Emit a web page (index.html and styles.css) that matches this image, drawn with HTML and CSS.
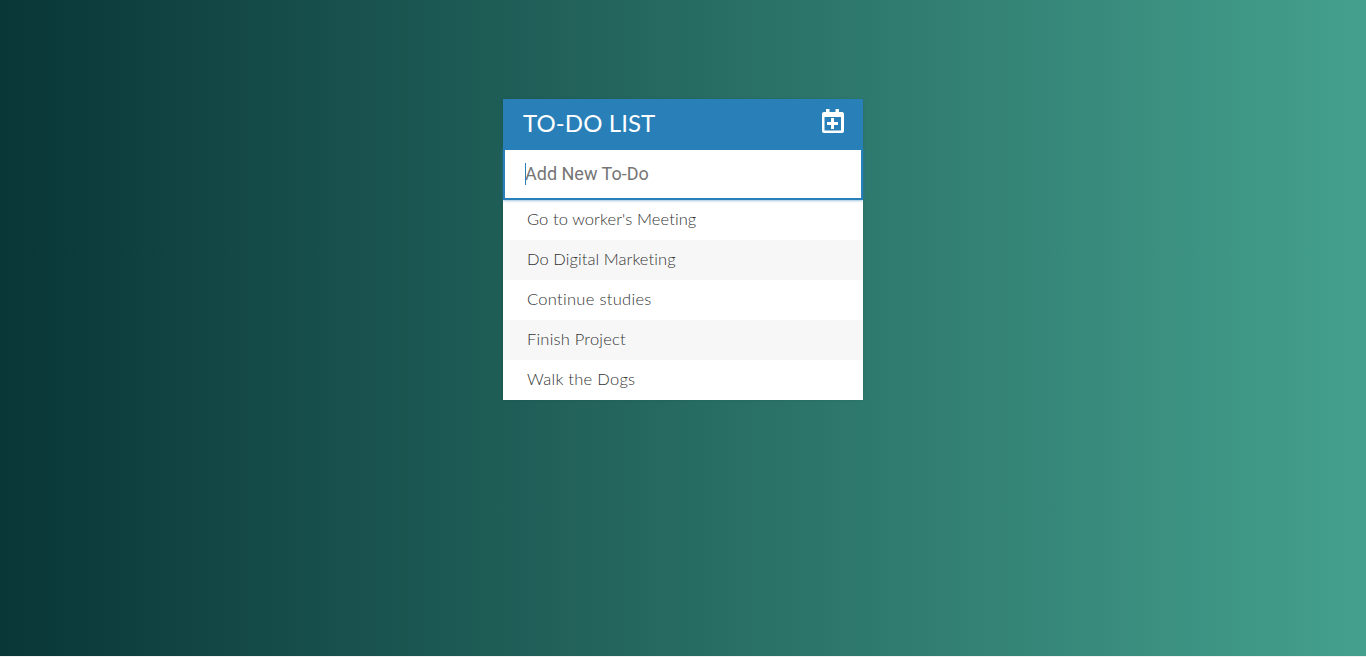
FILE: index.html
```html
<!DOCTYPE html>
<html lang="en">
<head>
<meta charset="utf-8">
<title>To-Do List</title>
<link rel="stylesheet" href="styles.css">
</head>
<body>
<main class="container">
  <header class="header">
    <h1 class="title">TO-DO LIST</h1>
    <svg class="toggle" viewBox="0 0 22 24" width="22" height="24" aria-hidden="true">
      <path fill="#fff" fill-rule="evenodd" d="M4 0h3.500v3H13.500V0H17v3h3a2 2 0 0 1 2 2v17a2 2 0 0 1-2 2H2a2 2 0 0 1-2-2V5a2 2 0 0 1 2-2h2zM2.500 8v13.500h16.500V8z"/>
      <path fill="#fff" d="M9 9h3v4h4v3h-4v4H9v-4H5v-3h4z"/>
    </svg>
  </header>
  <div class="field"><span class="caret"></span><span class="placeholder">Add New To-Do</span></div>
  <ul class="list">
    <li class="item meeting">Go to worker's Meeting</li>
    <li class="item marketing">Do Digital Marketing</li>
    <li class="item studies">Continue studies</li>
    <li class="item project">Finish Project</li>
    <li class="item dogs">Walk the Dogs</li>
  </ul>
</main>
</body>
</html>
```
FILE: styles.css
```css
* { box-sizing: border-box; }
html { background: #f1f1f1; overflow: hidden; }
body {
  margin: 0;
  height: 657px;
  overflow: hidden;
  padding-top: 99px;
  background: linear-gradient(to right, #093637, #44a08d);
  border-bottom: 1px solid #f1f1f1;
  font-family: Lato, sans-serif;
}
.container {
  width: 360px;
  margin: 0 auto;
  background: #fff;
  box-shadow: 0 0 3px rgba(0, 0, 0, .1);
}
.header {
  height: 49px;
  padding: 0 19px 0 20px;
  display: flex;
  justify-content: space-between;
  background: #2980b9;
}
.title {
  margin: 0;
  color: #fff;
  font-size: 24px;
  font-weight: 400;
  line-height: 48px;
  letter-spacing: .1px;
}
.toggle { margin-top: 10px; }
.field {
  position: relative;
  height: 52px;
  padding-left: 20px;
  background: #fff;
  border: 2px solid #2980b9;
  box-shadow: 0 0 3px rgba(41, 128, 185, .8);
  font: 400 18px/47px Roboto, sans-serif;
  color: #757575;
}
.caret {
  position: absolute;
  left: 20px;
  top: 13px;
  width: 1px;
  height: 22px;
  background: #2980b9;
}
.list { margin: 0; padding: 0; list-style: none; }
.item {
  height: 40px;
  line-height: 39px;
  padding-left: 24px;
  font-size: 16.5px;
  font-weight: 300;
  color: #333;
}
.item:nth-child(even) { background: #f7f7f7; }
.meeting { letter-spacing: .09px; }
.marketing { letter-spacing: .07px; }
.studies { letter-spacing: .3px; }
.project { letter-spacing: .22px; }
.dogs { letter-spacing: .28px; }
```
